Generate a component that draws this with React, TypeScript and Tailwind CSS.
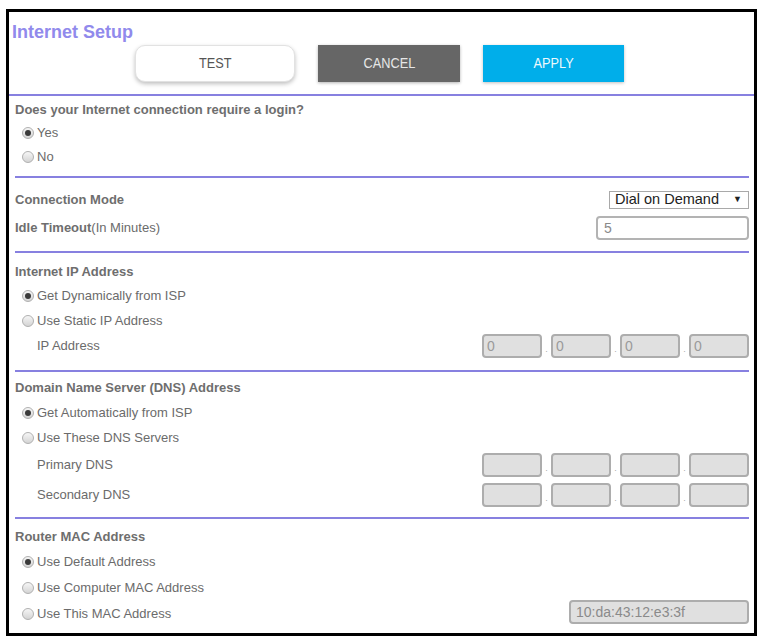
import { Fragment } from "react";

const font = { fontFamily: '"Liberation Sans", Arial, sans-serif' };

const Radio = ({ checked }: { checked?: boolean }) => (
  <span className="w-[12px] h-[12px] rounded-full border border-[#b0b0b0] bg-linear-to-b from-[#f6f6f6] to-[#d4d4d4] flex items-center justify-center shrink-0">
    {checked && <span className="w-[6px] h-[6px] rounded-full bg-[#3a3a3a]" />}
  </span>
);

const RadioRow = ({ label, checked, h, right }: { label: string; checked?: boolean; h: string; right?: React.ReactNode }) => (
  <div className={`${h} flex items-center justify-between pl-[7px]`}>
    <div className="flex items-center">
      <Radio checked={checked} />
      <span className="ml-[3px]">{label}</span>
    </div>
    {right}
  </div>
);

const IpBoxes = ({ values }: { values?: string[] }) => (
  <div className="flex items-end">
    {[0, 1, 2, 3].map((i) => (
      <Fragment key={i}>
        {i > 0 && <span className="w-[9px] text-center text-[9px] leading-none text-[#aaa] mb-[4px]">.</span>}
        <div className="w-[60px] h-[24px] rounded-[4px] border-2 border-[#adadad] bg-[#e0e0e0] text-[14px] leading-[20px] pl-[3px] text-[#9a9a9a]">
          {values?.[i]}
        </div>
      </Fragment>
    ))}
  </div>
);

const Title = ({ children, h }: { children: React.ReactNode; h: string }) => (
  <div className={`${h} flex items-center font-bold text-[#6e6e6e]`}>{children}</div>
);

export default function App() {
  return (
    <div className="w-[762px] h-[637px] bg-white pt-[9px] pl-[6px]" style={font}>
      <div className="w-[751px] h-[627px] border-[3px] border-black text-[13px] text-[#6b6b6b]">
        {/* header */}
        <div className="border-b-2 border-[#8780e0] pb-[12px]">
          <div className="pl-[3px] pt-[11px] h-[28px] text-[18px] leading-[18px] font-bold text-[#918aec]">Internet Setup</div>
          <div className="mt-[5px] pl-[126px] flex gap-[23px]">
            <button className="w-[160px] h-[37px] rounded-[10px] bg-white border border-[#e2e2e2] shadow-[0_2px_4px_rgba(0,0,0,0.25)] text-[15px] text-[#555]">
              <span className="inline-block scale-x-[0.85]">TEST</span>
            </button>
            <button className="w-[142px] h-[37px] bg-[#666666] shadow-[0_1px_3px_rgba(0,0,0,0.3)] text-[15px] text-[#e6e6e6]">
              <span className="inline-block scale-x-[0.85]">CANCEL</span>
            </button>
            <button className="w-[141px] h-[37px] bg-[#00aeea] shadow-[0_1px_3px_rgba(0,0,0,0.25)] text-[15px] text-[#eef9fd]">
              <span className="inline-block scale-x-[0.85]">APPLY</span>
            </button>
          </div>
        </div>

        {/* login */}
        <div className="ml-[6px] mr-[5px] border-b-2 border-[#8780e0] pt-[2px] pb-[6px]">
          <Title h="h-[24px]">Does your Internet connection require a login?</Title>
          <RadioRow h="h-[22px]" label="Yes" checked />
          <RadioRow h="h-[26px]" label="No" />
        </div>

        {/* connection mode */}
        <div className="ml-[6px] mr-[5px] border-b-2 border-[#8780e0] pt-[10px] pb-[11px]">
          <div className="h-[24px] flex items-center justify-between">
            <span className="font-bold text-[#6e6e6e]">Connection Mode</span>
            <div className="w-[140px] h-[18px] border border-[#a9a9a9] bg-white flex items-center justify-between pl-[5px] pr-[6px] text-[14.5px] text-[#222]">
              <span>Dial on Demand</span>
              <span className="text-[9px] text-[#222]">▼</span>
            </div>
          </div>
          <div className="mt-[4px] h-[24px] flex items-center justify-between">
            <span>
              <span className="font-bold text-[#6e6e6e]">Idle Timeout</span>(In Minutes)
            </span>
            <div className="w-[153px] h-[24px] rounded-[4px] border-2 border-[#b3b3b3] bg-white text-[14px] leading-[20px] pl-[6px] text-[#8a8a8a]">5</div>
          </div>
        </div>

        {/* internet ip */}
        <div className="ml-[6px] mr-[5px] border-b-2 border-[#8780e0] pt-[7px] pb-[12px]">
          <Title h="h-[24px]">Internet IP Address</Title>
          <RadioRow h="h-[24px]" label="Get Dynamically from ISP" checked />
          <RadioRow h="h-[26px]" label="Use Static IP Address" />
          <div className="h-[24px] flex items-center justify-between pl-[22px]">
            <span>IP Address</span>
            <IpBoxes values={["0", "0", "0", "0"]} />
          </div>
        </div>

        {/* dns */}
        <div className="ml-[6px] mr-[5px] border-b-2 border-[#8780e0] pt-[4px] pb-[10px]">
          <Title h="h-[24px]">Domain Name Server (DNS) Address</Title>
          <RadioRow h="h-[25px]" label="Get Automatically from ISP" checked />
          <RadioRow h="h-[25px]" label="Use These DNS Servers" />
          <div className="mt-[3px] h-[24px] flex items-center justify-between pl-[22px]">
            <span>Primary DNS</span>
            <IpBoxes />
          </div>
          <div className="mt-[6px] h-[24px] flex items-center justify-between pl-[22px]">
            <span>Secondary DNS</span>
            <IpBoxes />
          </div>
        </div>

        {/* mac */}
        <div className="ml-[6px] mr-[5px] pt-[6px]">
          <Title h="h-[24px]">Router MAC Address</Title>
          <RadioRow h="h-[26px]" label="Use Default Address" checked />
          <RadioRow h="h-[26px]" label="Use Computer MAC Address" />
          <RadioRow
            h="h-[26px]"
            label="Use This MAC Address"
            right={
              <div className="mb-[4px] w-[180px] h-[24px] rounded-[4px] border-2 border-[#adadad] bg-[#e0e0e0] text-[14px] leading-[20px] pl-[5px] text-[#8a8a8a]">
                10:da:43:12:e3:3f
              </div>
            }
          />
        </div>
      </div>
    </div>
  );
}
